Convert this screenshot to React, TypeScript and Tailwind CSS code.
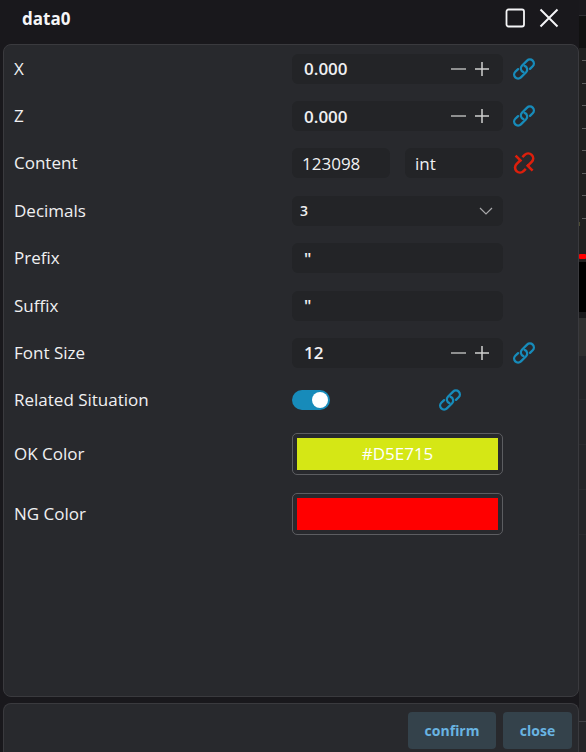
import { useState, type ReactNode } from 'react'
import clsx from 'clsx'

const field = 'h-[30px] rounded-md bg-[#232427] text-[#f0f0f2] outline-none'

function LinkIcon() {
  return (
    <svg viewBox="0 0 24 24" className="h-6 w-6" fill="none" stroke="currentColor" strokeWidth="2.3" strokeLinecap="round" strokeLinejoin="round">
      <path d="M12.6 8.9a3.9 3.9 0 0 1 1.5 6.4l-5.2 5.1a3.9 3.9 0 0 1-5.6-5.6l2.8-2.7" />
      <path d="M18 11.9l2.7-2.7a3.9 3.9 0 0 0-5.6-5.6l-5.2 5.1a3.9 3.9 0 0 0 1.5 6.4" />
    </svg>
  )
}

function UnlinkIcon() {
  return (
    <svg viewBox="0 0 24 24" className="h-6 w-6" fill="none" stroke="currentColor" strokeWidth="2.6">
      <path d="M3.6 4.6l5.8 5.8M14.8 13.8l5.8 5.8" />
      <path d="M10.4 6.2l2.3-2.3a4.9 4.9 0 0 1 7 7l-4.3 4.2" />
      <path d="M13.8 17.8l-2.3 2.3a4.9 4.9 0 0 1-7-7l4.3-4.2" />
    </svg>
  )
}

function LinkButton({ label, linked = true, className }: { label: string; linked?: boolean; className?: string }) {
  return (
    <button type="button" aria-label={label} className={clsx('shrink-0', linked ? 'text-[#178bba]' : 'text-[#dd1f0c]', className)}>
      {linked ? <LinkIcon /> : <UnlinkIcon />}
    </button>
  )
}

function Row({ id, label, children }: { id: string; label: string; children: ReactNode }) {
  return (
    <div className="grid grid-cols-2 items-center">
      <label htmlFor={id} className="pl-[10px] text-[17px] leading-6 text-[#f0f0f2]">
        {label}
      </label>
      <div className="flex items-center pl-px">{children}</div>
    </div>
  )
}

function NumberField({ id, initial, digits }: { id: string; initial: number; digits: number }) {
  const [value, setValue] = useState(initial.toFixed(digits))
  const step = (n: number) => setValue((Number(value) + n).toFixed(digits))

  return (
    <div className={clsx(field, 'flex w-[211px] items-center pr-[9px]')}>
      <input
        id={id}
        value={value}
        onChange={(e) => setValue(e.target.value)}
        className="h-full min-w-0 flex-1 bg-transparent pl-3 text-[17px] font-semibold outline-none"
      />
      <button type="button" aria-label="Decrease" onClick={() => step(-1)} className="text-[#b4b4b4]">
        <svg viewBox="0 0 24 24" className="h-6 w-6" stroke="currentColor" strokeWidth="1.5">
          <path d="M5 12h15" />
        </svg>
      </button>
      <button type="button" aria-label="Increase" onClick={() => step(1)} className="text-[#d0d0d0]">
        <svg viewBox="0 0 24 24" className="h-6 w-6" stroke="currentColor" strokeWidth="1.5">
          <path d="M5 12h14M12 5v14" />
        </svg>
      </button>
    </div>
  )
}

function ColorField({ id, swatch, text }: { id: string; swatch: string; text?: string }) {
  return (
    <button id={id} type="button" className="h-[42px] w-[211px] rounded-[5px] border border-[#5c5d61] p-1">
      <span className={clsx('flex h-full items-center justify-center text-[17px] text-white', swatch)}>{text}</span>
    </button>
  )
}

// ruler and chart that show past the dialog's right edge
function Backdrop() {
  return (
    <svg aria-hidden="true" className="w-[7px] shrink-0 bg-[#252528]">
      <rect width="7" height="15" fill="#1a191d" />
      <rect y="15" width="7" height="1" fill="#303034" />
      <rect y="16" width="7" height="32" fill="#111111" />
      <rect y="48" width="7" height="214" fill="#202020" />
      {[60, 83, 105, 128, 150, 173, 195, 218].map((y) => (
        <rect key={y} x="3" y={y} width="4" height="1" fill="#5e5e5e" />
      ))}
      <rect y="222" width="1" height="4" fill="#4d4d33" />
      <rect y="254" width="7" height="5" rx="1" fill="#ff0000" />
      <rect y="262" width="7" height="50" fill="#000000" />
      <rect y="312" width="7" height="6" fill="#19191b" />
      <rect y="318" width="7" height="38" fill="#303030" />
      {[399, 444, 489, 534].map((y) => (
        <rect key={y} y={y} width="7" height="1" fill="#2b2b2e" />
      ))}
      <rect y="721" width="7" height="1" fill="#414145" />
    </svg>
  )
}

export default function App() {
  const [related, setRelated] = useState(true)

  return (
    <div className="flex min-h-screen bg-[#19181c] font-['Open_Sans','Noto_Sans',sans-serif]">
      <form className="flex min-w-0 flex-1 flex-col pl-[3px]" onSubmit={(e) => e.preventDefault()}>
        <header className="flex h-11 items-start justify-between pt-1 pr-[17px] pl-[19px] text-[#f5f5f7]">
          <h1 className="text-[17px] leading-[30px] font-bold">data0</h1>
          <div className="flex gap-2 pt-px">
            <button type="button" aria-label="Maximize">
              <svg viewBox="0 0 26 26" className="h-[26px] w-[26px]" fill="none" stroke="currentColor" strokeWidth="1.8">
                <rect x="4.5" y="4.5" width="17.5" height="17" rx="2" />
              </svg>
            </button>
            <button type="button" aria-label="Close dialog">
              <svg viewBox="0 0 26 26" className="h-[26px] w-[26px]" fill="none" stroke="currentColor" strokeWidth="2">
                <path d="M4.5 4.5l17 17M21.5 4.5l-17 17" />
              </svg>
            </button>
          </div>
        </header>

        <main className="flex-1 rounded-lg border border-[#3a3a3e] bg-[#28292d]">
          <div className="grid h-[379px] grid-rows-8">
            <Row id="x" label="X">
              <NumberField id="x" initial={0} digits={3} />
              <LinkButton label="Link X" className="ml-[9px]" />
            </Row>
            <Row id="z" label="Z">
              <NumberField id="z" initial={0} digits={3} />
              <LinkButton label="Link Z" className="ml-[9px]" />
            </Row>
            <Row id="content" label="Content">
              <input id="content" defaultValue="123098" className={clsx(field, 'w-[98px] px-[10px] text-[17px]')} />
              <input aria-label="Content type" defaultValue="int" className={clsx(field, 'ml-[15px] w-[98px] px-[10px] text-[17px]')} />
              <LinkButton label="Unlink content" linked={false} className="ml-[9px]" />
            </Row>
            <Row id="decimals" label="Decimals">
              <div className="relative w-[211px]">
                <select id="decimals" defaultValue="3" className={clsx(field, 'w-full appearance-none px-2 text-sm font-semibold')}>
                  {[0, 1, 2, 3, 4, 5].map((n) => (
                    <option key={n}>{n}</option>
                  ))}
                </select>
                <svg viewBox="0 0 16 16" className="pointer-events-none absolute top-2 right-[9px] h-4 w-4" fill="none" stroke="#a8a8aa" strokeWidth="1.2">
                  <path d="M2 4l6 6 6-6" />
                </svg>
              </div>
            </Row>
            <Row id="prefix" label="Prefix">
              <input id="prefix" defaultValue={'"'} className={clsx(field, 'w-[211px] px-3 text-[17px] font-semibold')} />
            </Row>
            <Row id="suffix" label="Suffix">
              <input id="suffix" defaultValue={'"'} className={clsx(field, 'w-[211px] px-3 text-[17px] font-semibold')} />
            </Row>
            <Row id="font-size" label="Font Size">
              <NumberField id="font-size" initial={12} digits={0} />
              <LinkButton label="Link font size" className="ml-[9px]" />
            </Row>
            <Row id="related" label="Related Situation">
              <input
                id="related"
                type="checkbox"
                role="switch"
                checked={related}
                onChange={(e) => setRelated(e.target.checked)}
                className="h-5 w-[38px] appearance-none rounded-full bg-[#55565a] p-[2px] before:block before:h-4 before:w-4 before:rounded-full before:bg-white checked:bg-[#178bba] checked:before:ml-[18px]"
              />
              <LinkButton label="Link related situation" className="ml-[108px]" />
            </Row>
          </div>
          <div className="grid auto-rows-[60px]">
            <Row id="ok-color" label="OK Color">
              <ColorField id="ok-color" swatch="bg-[#d5e715]" text="#D5E715" />
            </Row>
            <Row id="ng-color" label="NG Color">
              <ColorField id="ng-color" swatch="bg-[#ff0000]" />
            </Row>
          </div>
        </main>

        <footer className="mt-[6px] flex h-[49px] justify-end gap-[7px] rounded-t-lg border border-b-0 border-[#3a3a3e] bg-[#28292d] pt-2 pr-[6px] text-sm font-bold text-[#69b4e2]">
          <button type="submit" className="h-[37px] w-[88px] rounded bg-[#34424b]">
            confirm
          </button>
          <button type="button" className="h-[37px] w-[69px] rounded bg-[#34424b]">
            close
          </button>
        </footer>
      </form>
      <Backdrop />
    </div>
  )
}
